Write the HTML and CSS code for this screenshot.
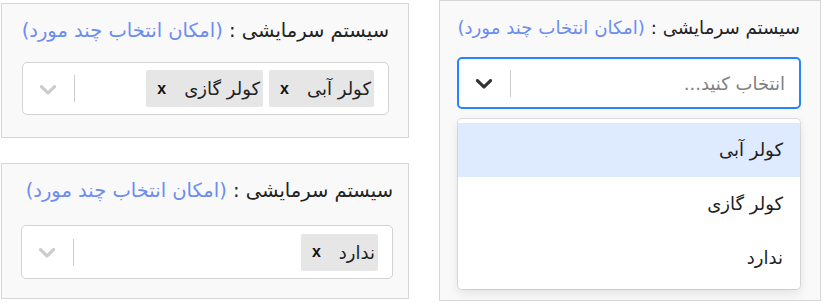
FILE: index.html
```html
<!DOCTYPE html>
<html lang="fa">
<head>
  <meta charset="UTF-8">
  <title>سیستم سرمایشی</title>
  <link rel="stylesheet" href="styles.css">
</head>
<body>
  <div class="page">
    <div class="col">
      <!-- multi select, two values -->
      <div class="panel panel-a" dir="rtl">
        <div class="label">سیستم سرمایشی : <span class="hint">(امکان انتخاب چند مورد)</span></div>
        <div class="control">
          <div class="values">
            <span class="tag"><span class="tag-text">کولر آبی</span><span class="tag-x">x</span></span>
            <span class="tag"><span class="tag-text">کولر گازی</span><span class="tag-x">x</span></span>
          </div>
          <div class="indicators">
            <span class="sep"></span>
            <span class="arrow">
              <svg width="28" height="28" viewBox="0 0 20 20"><path d="M4.516 7.548c0.436-0.446 1.043-0.481 1.576 0l3.908 3.747 3.908-3.747c0.533-0.481 1.141-0.446 1.574 0 0.436 0.445 0.408 1.197 0 1.615-0.406 0.418-4.695 4.502-4.695 4.502-0.217 0.223-0.502 0.335-0.787 0.335s-0.57-0.112-0.789-0.335c0 0-4.287-4.084-4.695-4.502s-0.436-1.17 0-1.615z"/></svg>
            </span>
          </div>
        </div>
      </div>

      <!-- multi select, one value -->
      <div class="panel panel-b" dir="rtl">
        <div class="label">سیستم سرمایشی : <span class="hint">(امکان انتخاب چند مورد)</span></div>
        <div class="control">
          <div class="values">
            <span class="tag"><span class="tag-text">ندارد</span><span class="tag-x">x</span></span>
          </div>
          <div class="indicators">
            <span class="sep"></span>
            <span class="arrow">
              <svg width="28" height="28" viewBox="0 0 20 20"><path d="M4.516 7.548c0.436-0.446 1.043-0.481 1.576 0l3.908 3.747 3.908-3.747c0.533-0.481 1.141-0.446 1.574 0 0.436 0.445 0.408 1.197 0 1.615-0.406 0.418-4.695 4.502-4.695 4.502-0.217 0.223-0.502 0.335-0.787 0.335s-0.57-0.112-0.789-0.335c0 0-4.287-4.084-4.695-4.502s-0.436-1.17 0-1.615z"/></svg>
            </span>
          </div>
        </div>
      </div>
    </div>

    <!-- open menu -->
    <div class="panel panel-c" dir="rtl">
      <div class="label">سیستم سرمایشی : <span class="hint">(امکان انتخاب چند مورد)</span></div>
      <div class="control focused">
        <div class="values">
          <span class="placeholder">انتخاب کنید...</span>
        </div>
        <div class="indicators">
          <span class="sep"></span>
          <span class="arrow">
            <svg width="28" height="28" viewBox="0 0 20 20"><path d="M4.516 7.548c0.436-0.446 1.043-0.481 1.576 0l3.908 3.747 3.908-3.747c0.533-0.481 1.141-0.446 1.574 0 0.436 0.445 0.408 1.197 0 1.615-0.406 0.418-4.695 4.502-4.695 4.502-0.217 0.223-0.502 0.335-0.787 0.335s-0.57-0.112-0.789-0.335c0 0-4.287-4.084-4.695-4.502s-0.436-1.17 0-1.615z"/></svg>
          </span>
        </div>
      </div>
      <div class="menu">
        <div class="option active">کولر آبی</div>
        <div class="option">کولر گازی</div>
        <div class="option">ندارد</div>
      </div>
    </div>
  </div>
</body>
</html>
```

FILE: styles.css
```css
body {
  margin: 0;
  background: #fff;
  font-family: "DejaVu Sans", sans-serif;
  color: #222;
}
.page {
  display: flex;
  align-items: flex-start;
  gap: 30px;
  padding-left: 1px;
}
.col {
  display: flex;
  flex-direction: column;
  gap: 25px;
  padding-top: 3px;
  width: 408px;
}
.panel {
  background: #f9f9f9;
  border: 1px solid #d6d6d6;
  box-sizing: border-box;
}
.panel-a {
  padding: 13px 19px 22px 20px;
}
.panel-b {
  padding: 13px 15px 19px 19px;
}
.panel-b .label {
  margin-bottom: 20px;
}
.panel-b .control {
  height: 54px;
}
.panel-c {
  width: 382px;
  padding: 13px 20px 11px 17px;
}
.panel-c .label {
  font-size: 18.2px;
  margin-bottom: 15px;
}
.label {
  font-size: 19.5px;
  line-height: 28px;
  margin-bottom: 17px;
  white-space: nowrap;
}
.hint {
  color: #6b8cf0;
}
.control {
  display: flex;
  align-items: center;
  height: 53px;
  box-sizing: border-box;
  background: #fff;
  border: 1px solid #d3d3d3;
  border-radius: 5px;
}
.control.focused {
  height: 52px;
  margin-right: -1px;
  border: 2px solid #2684ff;
}
.values {
  flex: 1;
  display: flex;
  align-items: center;
  gap: 6px;
  padding-right: 14px;
}
.tag {
  display: flex;
  align-items: center;
  height: 37px;
  background: #e6e6e6;
  border-radius: 2px;
}
.tag-text {
  font-size: 18px;
  padding: 0 3px 0 7px;
}
.tag-x {
  font-family: "Liberation Sans", sans-serif;
  font-weight: bold;
  font-size: 16px;
  color: #111;
  padding: 0 11px;
}
.placeholder {
  font-size: 18px;
  color: #808080;
}
.indicators {
  display: flex;
  align-items: center;
  align-self: stretch;
}
.sep {
  width: 1px;
  height: 27px;
  background: #ccc;
}
.arrow {
  display: flex;
  padding: 0 12px 0 11px;
}
.arrow svg {
  fill: #ccc;
}
.focused .arrow svg {
  fill: #333;
}
.menu {
  margin: 10px 0 0 1px;
  padding: 4px 0;
  background: #fff;
  border-radius: 4px;
  box-shadow: 0 0 0 1px rgba(0,0,0,0.1), 0 4px 11px rgba(0,0,0,0.1);
}
.option {
  height: 54px;
  line-height: 54px;
  padding: 0 17px;
  font-size: 18px;
}
.option.active {
  background: #deebff;
}
```
